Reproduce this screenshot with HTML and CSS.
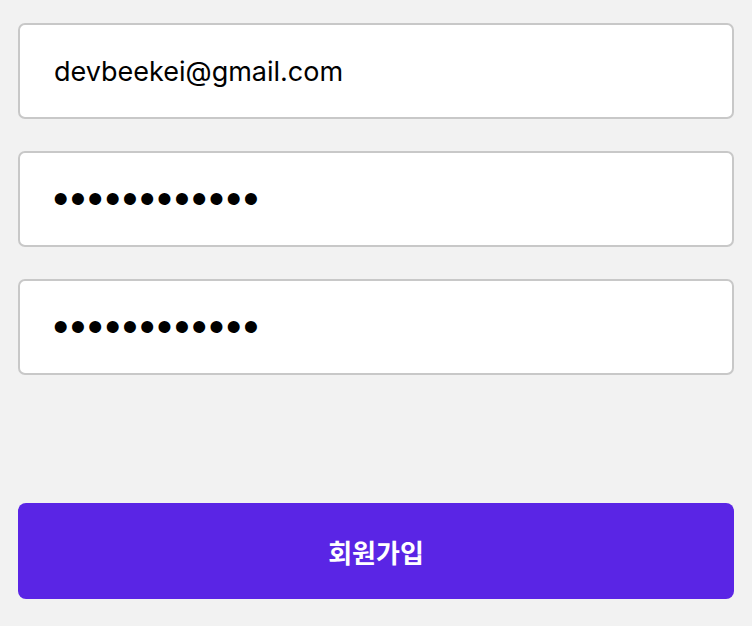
FILE: index.html
```html
<!DOCTYPE html>
<html lang="ko">
<head>
<meta charset="utf-8">
<link rel="stylesheet" href="styles.css">
</head>
<body>
<form class="signup">
  <div class="fields">
    <input class="field" type="email" value="devbeekei@gmail.com">
    <input class="field field-pw" type="password" value="aaaaaaaaaaaa">
    <input class="field field-pw" type="password" value="aaaaaaaaaaaa">
  </div>
  <button class="submit" type="button">회원가입</button>
</form>
</body>
</html>
```

FILE: styles.css
```css
html, body {
  margin: 0;
  padding: 0;
  background: #f2f2f2;
  height: 100%;
}
.signup {
  display: flex;
  flex-direction: column;
  padding: 23px 18px 0 18px;
  gap: 128px;
}
.fields {
  display: flex;
  flex-direction: column;
  gap: 32px;
}
.field {
  box-sizing: border-box;
  width: 100%;
  height: 96px;
  margin: 0;
  padding: 0 0 0 34px;
  border: 2px solid #c8c8c8;
  border-radius: 7px;
  background: #ffffff;
  color: #000000;
  font-family: Inter, "Noto Sans", sans-serif;
  font-size: 27px;
  outline: none;
}
.field-pw {
  font-family: "Liberation Sans", Arial, sans-serif;
  font-size: 44px;
  letter-spacing: 1.9px;
  padding-left: 33px;
}
.submit {
  box-sizing: border-box;
  width: 100%;
  height: 96px;
  margin: 0;
  border: none;
  border-radius: 8px;
  background: #5a25e5;
  color: #ffffff;
  font-family: "Noto Sans CJK KR", sans-serif;
  font-size: 26px;
  font-weight: 700;
}
```
